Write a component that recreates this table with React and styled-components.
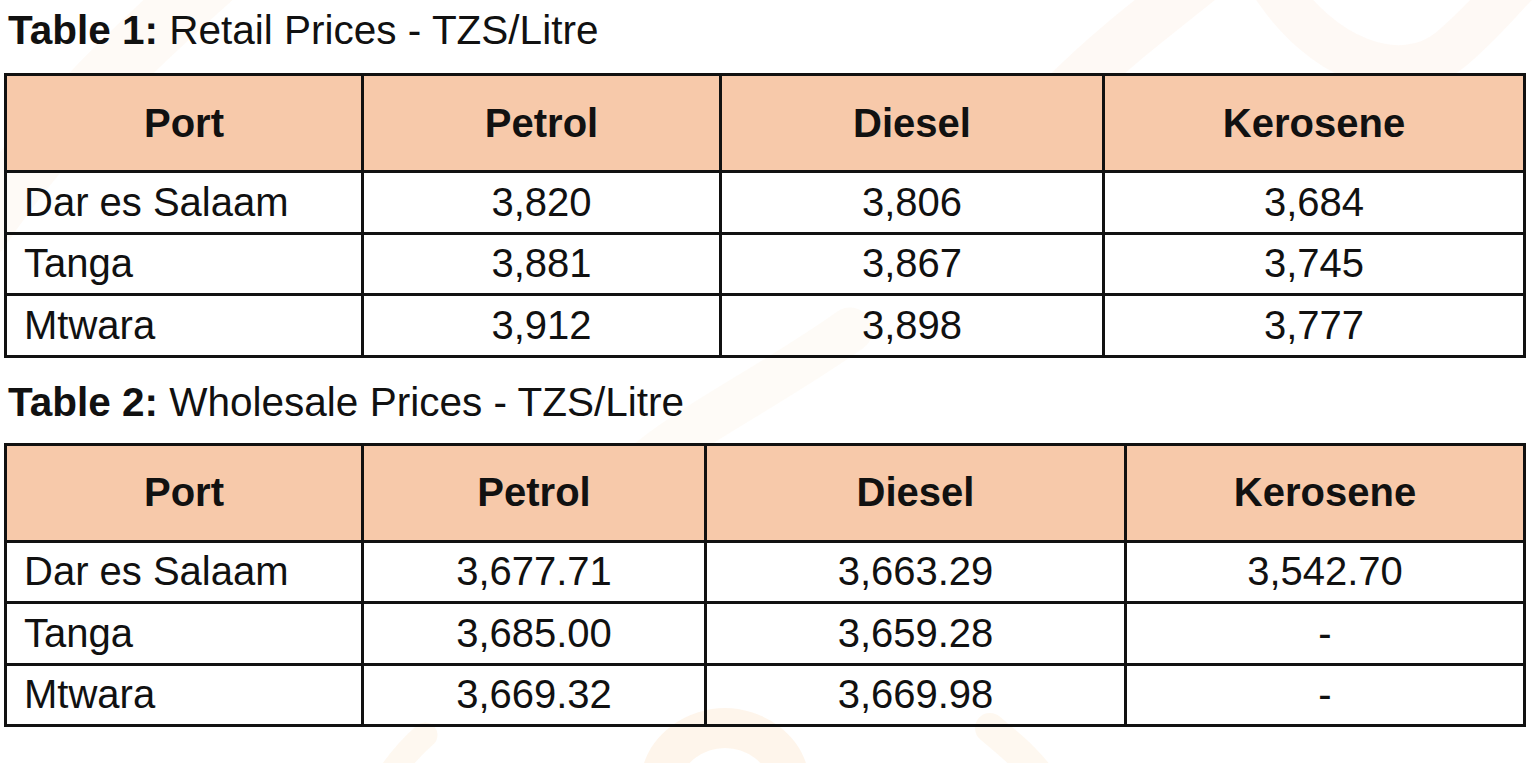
import React from "react";
import styled, { createGlobalStyle } from "styled-components";

const GlobalStyle = createGlobalStyle`
  html, body { margin: 0; padding: 0; background: #ffffff; }
  body { font-family: "Liberation Sans", Arial, sans-serif; color: #111; }
  #root { min-height: 763px; }
`;

const Page = styled.div`
  position: relative;
  width: 1536px;
  height: 763px;
  overflow: hidden;
  background: #ffffff;
`;

const Watermark = styled.svg`
  position: absolute;
  inset: 0;
  width: 100%;
  height: 100%;
  pointer-events: none;
  z-index: 0;
`;

const Content = styled.div`
  position: relative;
  z-index: 1;
  display: flex;
  flex-direction: column;
  padding: 7px 13px 0 4px;
`;

const Title = styled.div`
  font-size: 40.5px;
  line-height: 46px;
  padding-left: 4px;
  margin: ${(p) => (p.$first ? "0" : "21px")} 0 ${(p) => (p.$first ? "20px" : "18px")} 0;
  color: #111;
  white-space: nowrap;
  b { font-weight: 700; }
`;

const Table = styled.table`
  width: 1519px;
  border-collapse: collapse;
  table-layout: fixed;
  font-size: 40px;
  color: #111;
`;

const HeadCell = styled.th`
  background: #f7c9aa;
  border: 3px solid #111;
  height: 94px;
  padding: 0;
  font-weight: 700;
  text-align: center;
  vertical-align: middle;
`;

const Cell = styled.td`
  border: 3px solid #111;
  height: 58.5px;
  padding: 0;
  padding-left: ${(p) => (p.$left ? "17px" : "0")};
  text-align: ${(p) => (p.$left ? "left" : "center")};
  vertical-align: middle;
  background: transparent;
`;

const columns = ["Port", "Petrol", "Diesel", "Kerosene"];

const retail = {
  widths: [357, 358, 383, 421],
  rows: [
    ["Dar es Salaam", "3,820", "3,806", "3,684"],
    ["Tanga", "3,881", "3,867", "3,745"],
    ["Mtwara", "3,912", "3,898", "3,777"],
  ],
};

const wholesale = {
  widths: [357, 343, 420, 399],
  rows: [
    ["Dar es Salaam", "3,677.71", "3,663.29", "3,542.70"],
    ["Tanga", "3,685.00", "3,659.28", "-"],
    ["Mtwara", "3,669.32", "3,669.98", "-"],
  ],
};

function PriceTable({ data }) {
  return (
    <Table>
      <colgroup>
        {data.widths.map((w, i) => (
          <col key={i} style={{ width: w }} />
        ))}
      </colgroup>
      <thead>
        <tr>
          {columns.map((c) => (
            <HeadCell key={c}>{c}</HeadCell>
          ))}
        </tr>
      </thead>
      <tbody>
        {data.rows.map((r) => (
          <tr key={r[0]}>
            {r.map((v, i) => (
              <Cell key={i} $left={i === 0}>
                {v}
              </Cell>
            ))}
          </tr>
        ))}
      </tbody>
    </Table>
  );
}

function BackgroundArt() {
  return (
    <Watermark viewBox="0 0 1536 763" preserveAspectRatio="none">
      <g fill="none" strokeLinecap="round">
        <path d="M-20 230 C 40 140, 120 60, 210 -20" stroke="#f6c79a" strokeOpacity="0.09" strokeWidth="60" />
        <path d="M1070 90 C 1110 50, 1150 20, 1200 -20" stroke="#f6c79a" strokeOpacity="0.1" strokeWidth="50" />
        <path d="M1270 -20 C 1320 60, 1400 90, 1450 50 C 1480 25, 1500 0, 1520 -20" stroke="#f6c79a" strokeOpacity="0.1" strokeWidth="45" />
        <path d="M650 460 C 700 420, 780 380, 850 330" stroke="#f6c79a" strokeOpacity="0.08" strokeWidth="45" />
        <path d="M660 790 C 660 745, 700 728, 725 728 C 750 728, 790 745, 790 790" stroke="#f5b66e" strokeOpacity="0.14" strokeWidth="40" />
        <path d="M990 728 C 1010 745, 1030 760, 1050 790" stroke="#f5b66e" strokeOpacity="0.1" strokeWidth="30" />
        <path d="M380 790 C 395 765, 410 748, 425 735" stroke="#f5b66e" strokeOpacity="0.1" strokeWidth="25" />
      </g>
    </Watermark>
  );
}

export default function App() {
  return (
    <>
      <GlobalStyle />
      <Page>
        <BackgroundArt />
        <Content>
          <Title $first>
            <b>Table 1:</b> Retail Prices - TZS/Litre
          </Title>
          <PriceTable data={retail} />
          <Title>
            <b>Table 2:</b> Wholesale Prices - TZS/Litre
          </Title>
          <PriceTable data={wholesale} />
        </Content>
      </Page>
    </>
  );
}
